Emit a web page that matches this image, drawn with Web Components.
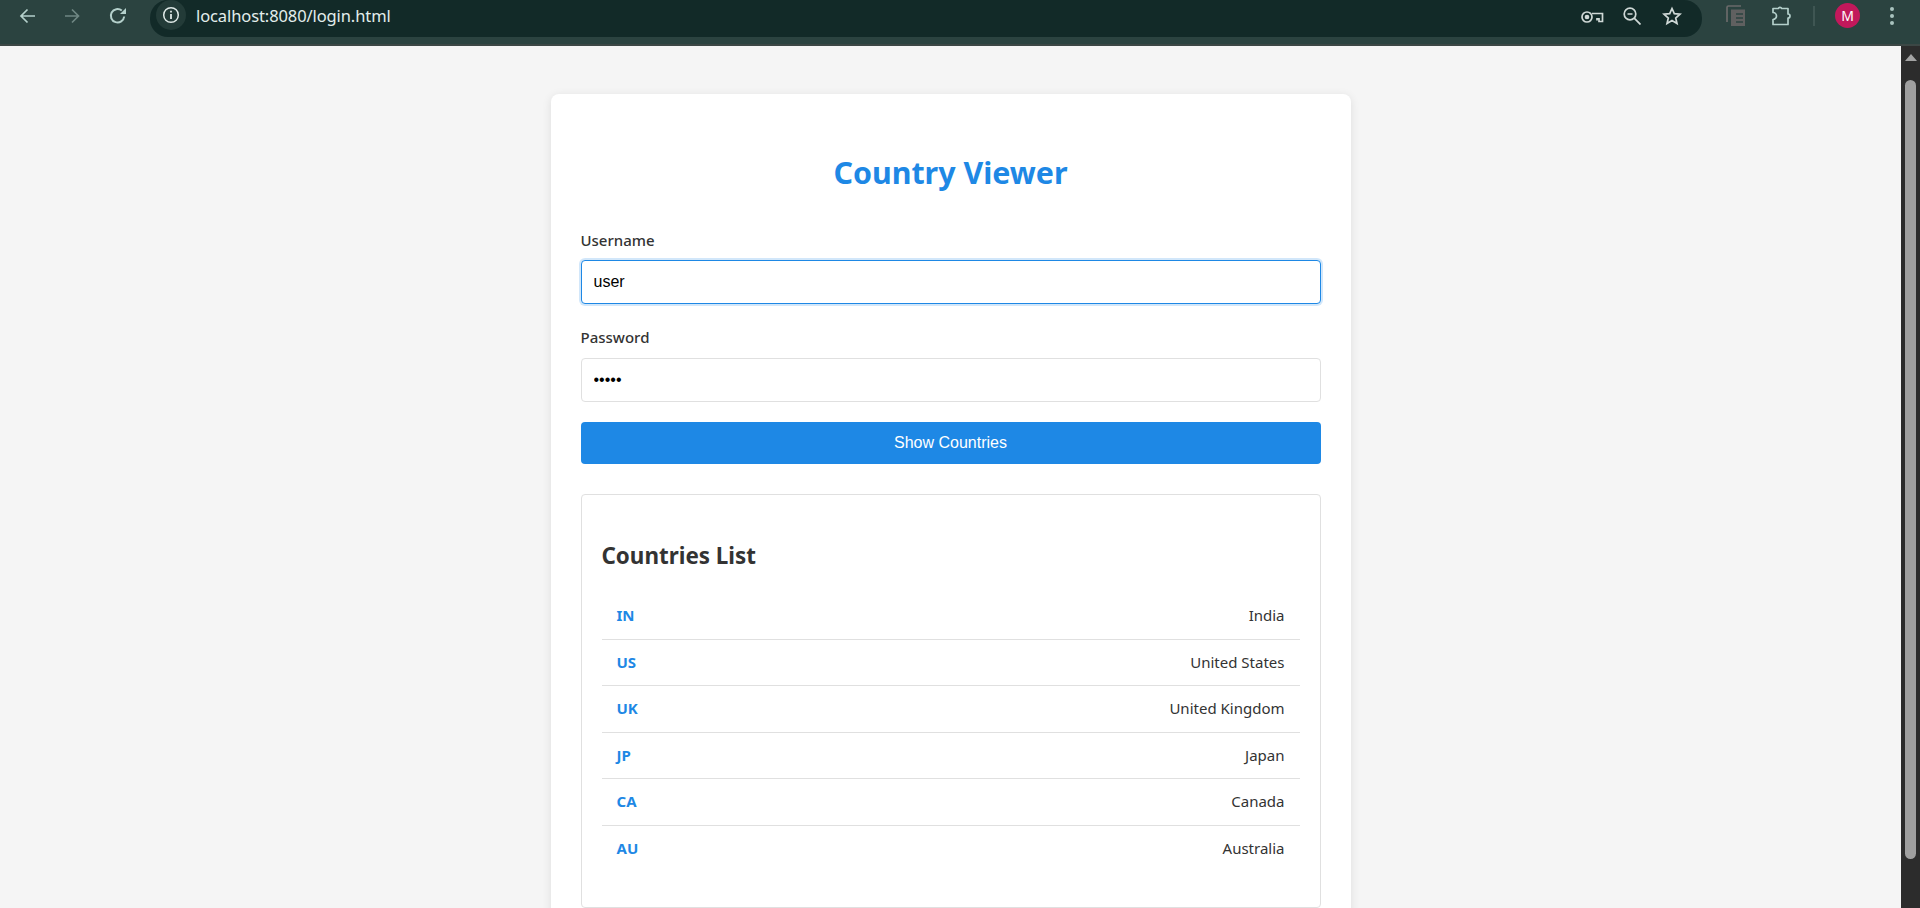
<!DOCTYPE html>
<html lang="en">
<head>
<meta charset="utf-8">
<title>Country Viewer</title>
<style>
  html, body { margin: 0; height: 100%; overflow: hidden; background: #f5f5f5; }
  body { display: flex; flex-direction: column; font-family: "Noto Sans", "Open Sans", sans-serif; }
</style>
</head>
<body>
<browser-toolbar url="localhost:8080/login.html"></browser-toolbar>
<page-viewport>
  <login-card heading="Country Viewer">
    <form-field label="Username" value="user" focused></form-field>
    <form-field label="Password" value="12345" type="password"></form-field>
    <primary-button>Show Countries</primary-button>
    <country-list heading="Countries List">
      <country-row code="IN">India</country-row>
      <country-row code="US">United States</country-row>
      <country-row code="UK">United Kingdom</country-row>
      <country-row code="JP">Japan</country-row>
      <country-row code="CA">Canada</country-row>
      <country-row code="AU">Australia</country-row>
    </country-list>
  </login-card>
</page-viewport>

<script>
class BrowserToolbar extends HTMLElement {
  constructor() {
    super();
    this.attachShadow({ mode: 'open' });
  }

  connectedCallback() {
    const url = this.getAttribute('url') || '';
    this.shadowRoot.innerHTML = `
      <style>
        :host {
          display: flex;
          flex: none;
          height: 44px;
          border-bottom: 2px solid #3c4745;
          background: #2b4340;
          color: #b4d0cb;
        }
        svg { display: block; flex: none; fill: none; stroke: currentColor; stroke-width: 1.7; }
        .nav {
          display: flex;
          align-items: center;
          flex: none;
          width: 150px;
          height: 32px;
          padding-left: 18px;
          box-sizing: border-box;
        }
        .dim { color: #6f8783; margin-left: 28px; }
        .reload { margin-left: 27px; stroke-width: 2; }
        .omnibox {
          display: flex;
          align-items: flex-start;
          flex: none;
          width: 1552px;
          height: 37px;
          border-radius: 18px;
          background: #122a28;
        }
        .chip {
          display: flex;
          align-items: center;
          justify-content: center;
          flex: none;
          width: 30px;
          height: 30px;
          margin: 0 0 0 6px;
          border-radius: 50%;
          background: #233b38;
          color: #dfe9e7;
        }
        .url {
          margin: 2px 0 0 10px;
          font: 400 16.500px/28px "Noto Sans", sans-serif;
          color: #e3eeec;
          letter-spacing: -0.1px;
          white-space: nowrap;
        }
        .lens {
          display: flex;
          align-items: center;
          height: 32px;
          margin-left: auto;
          margin-right: 20px;
          color: #cfd8d6;
        }
        .key { margin-top: 2px; }
        .zoom { margin-left: 19px; }
        .star { margin-left: 21px; }
        .side {
          display: flex;
          align-items: center;
          flex: none;
          height: 32px;
          padding-left: 24px;
          box-sizing: border-box;
        }
        .puzzle { margin-left: 26px; margin-top: -1px; }
        .sep { width: 2px; height: 20px; margin: 0 20px 0 21px; background: #3f5653; }
        .avatar {
          display: flex;
          align-items: center;
          justify-content: center;
          flex: none;
          width: 25px;
          height: 25px;
          margin-top: -1px;
          border-radius: 50%;
          background: #c2185b;
          color: #fff;
          font: 400 14px/1 "Noto Sans", sans-serif;
        }
        .menu { margin-left: 30px; color: #a9c3be; }
      </style>
      <div class="nav">
        <svg width="18" height="18" viewBox="0 0 18 18"><path d="M17 9H3M9.500 2.500 3 9l6.500 6.500"/></svg>
        <svg class="dim" width="18" height="18" viewBox="0 0 18 18"><path d="M1 9h13.500M8 2.500 14.500 9 8 15.500"/></svg>
        <svg class="reload" width="18" height="18" viewBox="0 0 18 18"><path d="M15.200 9.500A6.700 6.700 0 1 1 12.800 3.600"/><path d="M17 1v6h-6z" fill="currentColor" stroke="none"/></svg>
      </div>
      <div class="omnibox">
        <div class="chip">
          <svg width="18" height="18" viewBox="0 0 18 18"><circle cx="9" cy="9" r="7.300" stroke-width="1.500"/><path d="M9 8v5M9 4.800v1.800" stroke-width="1.800"/></svg>
        </div>
        <div class="url">${url}</div>
        <div class="lens">
          <svg class="key" width="24" height="14" viewBox="0 0 24 14" stroke-width="1.700"><circle cx="7" cy="7" r="5"/><circle cx="7" cy="7" r="1.500" fill="currentColor"/><path d="M12 3.500h10.500v8h-3.500V8.800h-2V10.500"/></svg>
          <svg class="zoom" width="18" height="18" viewBox="0 0 18 18" stroke-width="1.700"><circle cx="7" cy="7" r="5.800"/><path d="M4.500 7h5M11.200 11.200 17.500 17.500"/></svg>
          <svg class="star" width="20" height="20" viewBox="0 0 20 20" stroke-width="1.800"><path d="m10 2.500 2.300 5.200 5.700.5-4.300 3.800 1.300 5.600-5-3-5 3 1.300-5.600L2 8.200l5.700-.5z"/></svg>
        </div>
      </div>
      <div class="side">
        <svg width="20" height="22" viewBox="0 0 20 22" style="color:#6a6a6a" stroke-width="1.600"><path d="M1 17V2.500C1 1.700 1.700 1 2.500 1H15"/><rect x="5" y="4.500" width="14" height="16.500" fill="#606060" stroke="none"/><path d="M10 9h7M10 13h7M10 17h7" stroke="#2b4340" stroke-width="1.500"/></svg>
        <svg class="puzzle" width="20" height="21" viewBox="0 0 20 21" stroke-width="1.700" stroke-linejoin="round"><path d="M1 3.500H6.300a1.800 1.800 0 0 1 3.400 0H16V9a2 2 0 0 1 0 4V19.500H1V14.500a3.500 3.500 0 0 0 0-7z"/></svg>
        <div class="sep"></div>
        <div class="avatar">M</div>
        <svg class="menu" width="4" height="18" viewBox="0 0 4 18"><circle cx="2" cy="2" r="2" fill="currentColor" stroke="none"/><circle cx="2" cy="9" r="2" fill="currentColor" stroke="none"/><circle cx="2" cy="16" r="2" fill="currentColor" stroke="none"/></svg>
      </div>
    `;
  }
}
customElements.define('browser-toolbar', BrowserToolbar);

class PageViewport extends HTMLElement {
  constructor() {
    super();
    this.attachShadow({ mode: 'open' });
    this.shadowRoot.innerHTML = `
      <style>
        :host { display: flex; flex: 1; min-height: 0; overflow: hidden; }
        .content {
          flex: 1;
          min-width: 0;
          display: flex;
          justify-content: center;
          align-items: flex-start;
          padding-top: 48px;
          overflow: hidden;
          background: #f5f5f5;
        }
        .bar {
          flex: none;
          width: 19px;
          display: flex;
          flex-direction: column;
          align-items: center;
          background: #2c2c2c;
        }
        .arrow {
          width: 0;
          height: 0;
          margin-top: 8px;
          border-left: 6.500px solid transparent;
          border-right: 6.500px solid transparent;
          border-bottom: 7px solid #a3a3a3;
        }
        .thumb {
          width: 11px;
          height: 779px;
          margin-top: 19px;
          border-radius: 6px;
          background: #9f9f9f;
        }
      </style>
      <div class="content"><slot></slot></div>
      <div class="bar"><div class="arrow"></div><div class="thumb"></div></div>
    `;
  }
}
customElements.define('page-viewport', PageViewport);

class LoginCard extends HTMLElement {
  constructor() {
    super();
    this.attachShadow({ mode: 'open' });
  }

  connectedCallback() {
    this.shadowRoot.innerHTML = `
      <style>
        :host {
          display: block;
          flex: none;
          width: 800px;
          box-sizing: border-box;
          padding: 56px 30px 30px;
          border-radius: 8px;
          background: #fff;
          box-shadow: 0 2px 10px rgba(0,0,0,0.1);
        }
        h1 {
          margin: 0 0 32px;
          font: 700 30.400px/46px "Noto Sans", sans-serif;
          text-align: center;
          color: #1e88e5;
        }
      </style>
      <h1>${this.getAttribute('heading')}</h1>
      <slot></slot>
    `;
  }
}
customElements.define('login-card', LoginCard);

class FormField extends HTMLElement {
  constructor() {
    super();
    this.attachShadow({ mode: 'open' });
  }

  connectedCallback() {
    const type = this.getAttribute('type') || 'text';
    const focused = this.hasAttribute('focused') ? 'focused' : '';
    this.shadowRoot.innerHTML = `
      <style>
        :host { display: block; margin-bottom: 21px; }
        :host(:last-of-type) { margin-bottom: 20px; }
        :host(:last-of-type) label { margin-bottom: 9px; }
        label {
          display: block;
          height: 24px;
          margin-bottom: 8px;
          font: 500 15px/24px "Noto Sans", sans-serif;
          color: #333;
        }
        input {
          display: block;
          width: 100%;
          height: 44px;
          box-sizing: border-box;
          padding: 0 12px;
          border: 1px solid #e0e0e0;
          border-radius: 4px;
          outline: none;
          font: 16px "Liberation Sans", Arial, sans-serif;
          color: #000;
          background: #fff;
        }
        input.focused {
          border-color: #1e88e5;
          box-shadow: 0 0 0 2px rgba(30,136,229,0.2);
        }
      </style>
      <label>${this.getAttribute('label')}</label>
      <input class="${focused}" type="${type}" value="${this.getAttribute('value') || ''}">
    `;
  }
}
customElements.define('form-field', FormField);

class PrimaryButton extends HTMLElement {
  constructor() {
    super();
    this.attachShadow({ mode: 'open' });
    this.shadowRoot.innerHTML = `
      <style>
        :host { display: block; }
        button {
          display: block;
          width: 100%;
          height: 42px;
          padding: 0;
          border: 0;
          border-radius: 4px;
          background: #1e88e5;
          color: #fff;
          font: 16px "Liberation Sans", Arial, sans-serif;
        }
      </style>
      <button type="button"><slot></slot></button>
    `;
  }
}
customElements.define('primary-button', PrimaryButton);

class CountryList extends HTMLElement {
  constructor() {
    super();
    this.attachShadow({ mode: 'open' });
  }

  connectedCallback() {
    this.shadowRoot.innerHTML = `
      <style>
        :host {
          display: block;
          margin-top: 30px;
          padding: 20px 20px 35px;
          border: 1px solid #e0e0e0;
          border-radius: 4px;
        }
        h2 {
          margin: 23px 0 19px;
          font: 700 22.400px/36px "Noto Sans", sans-serif;
          color: #333;
        }
      </style>
      <h2>${this.getAttribute('heading')}</h2>
      <slot></slot>
    `;
  }
}
customElements.define('country-list', CountryList);

class CountryRow extends HTMLElement {
  constructor() {
    super();
    this.attachShadow({ mode: 'open' });
  }

  connectedCallback() {
    this.shadowRoot.innerHTML = `
      <style>
        :host {
          display: flex;
          justify-content: space-between;
          height: 45.500px;
          padding: 0 15px;
          border-bottom: 1px solid #e0e0e0;
          font: 400 15px/44px "Noto Sans", sans-serif;
          color: #333;
        }
        :host(:last-of-type) { border-bottom-color: transparent; }
        .code { font-weight: 700; color: #1e88e5; }
      </style>
      <span class="code">${this.getAttribute('code')}</span>
      <span><slot></slot></span>
    `;
  }
}
customElements.define('country-row', CountryRow);
</script>
</body>
</html>
